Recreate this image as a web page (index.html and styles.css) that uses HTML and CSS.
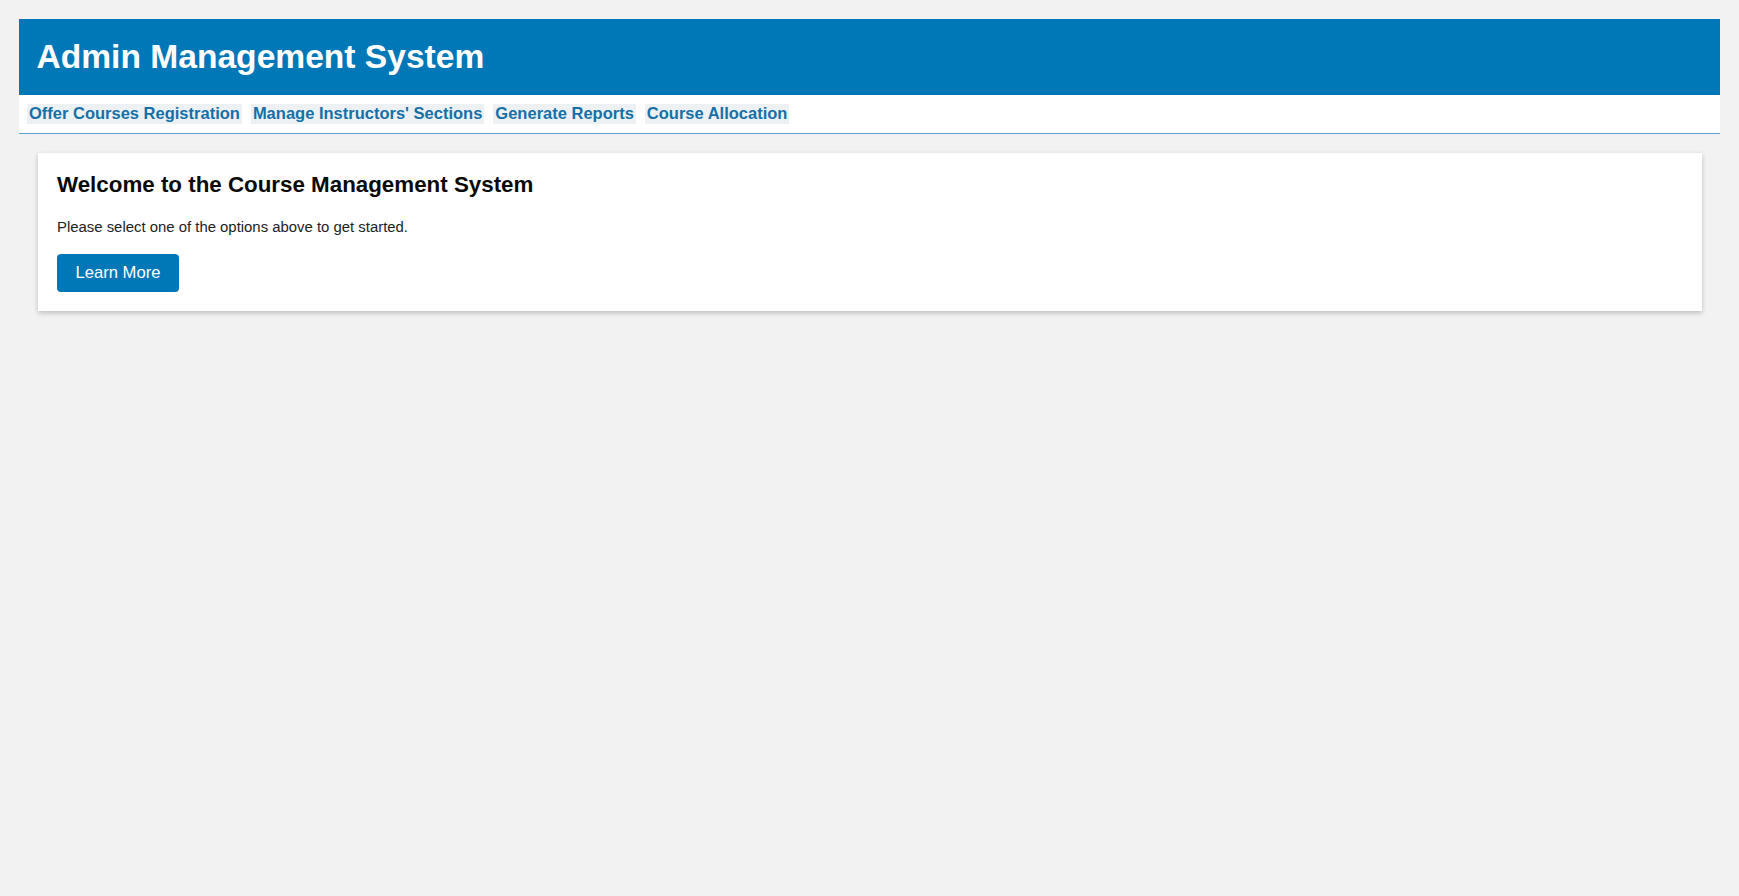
FILE: index.html
```html
<!DOCTYPE html>
<html lang="en">
<head>
<meta charset="utf-8">
<title>Admin Management System</title>
<link rel="stylesheet" href="styles.css">
</head>
<body>
<header class="site-header">
  <h1 class="site-title">Admin Management System</h1>
</header>
<nav class="site-nav">
  <a class="nav-link" href="#">Offer Courses Registration</a>
  <a class="nav-link" href="#">Manage Instructors' Sections</a>
  <a class="nav-link" href="#">Generate Reports</a>
  <a class="nav-link" href="#">Course Allocation</a>
</nav>
<main class="main">
  <section class="card">
    <h2 class="card-title">Welcome to the Course Management System</h2>
    <p class="card-text">Please select one of the options above to get started.</p>
    <button class="btn" type="button">Learn More</button>
  </section>
</main>
</body>
</html>
```

FILE: styles.css
```css
html, body {
  margin: 0;
  padding: 0;
}
body {
  background: #f2f2f2;
  font-family: "Liberation Sans", Arial, sans-serif;
  padding: 19px;
}
.site-header {
  background: #0077b6;
  height: 76px;
  box-sizing: border-box;
  padding: 0 17.5px;
  display: flex;
  align-items: center;
}
.site-title {
  margin: 0;
  color: #ffffff;
  font-size: 33.6px;
  font-weight: bold;
  line-height: 1.15;
}
.site-nav {
  background: #ffffff;
  padding: 9px 8px;
  border-bottom: 1px solid #5aa3cd;
  display: flex;
  gap: 9px;
}
.nav-link {
  display: block;
  background: #eef1f3;
  color: #1570a8;
  font-weight: bold;
  font-size: 16.5px;
  line-height: 19px;
  padding: 0 2px 1px;
  text-decoration: none;
}
.main {
  padding: 19px 18.5px;
}
.card {
  background: #ffffff;
  padding: 18.5px 19.5px 19px;
  box-shadow: 0 2px 5px rgba(0, 0, 0, 0.22);
}
.card-title {
  margin: 0 0 21.8px;
  font-size: 22.35px;
  font-weight: bold;
  line-height: 1.15;
  color: #0a0a0a;
}
.card-text {
  margin: 0 0 18.2px;
  font-size: 14.9px;
  line-height: 1.15;
  color: #222222;
}
.btn {
  display: flex;
  align-items: center;
  justify-content: center;
  width: 122px;
  height: 38px;
  padding: 0;
  border: 0;
  border-radius: 4px;
  background: #0077b6;
  color: #ffffff;
  font-family: "Liberation Sans", Arial, sans-serif;
  font-size: 16.6px;
}
```
